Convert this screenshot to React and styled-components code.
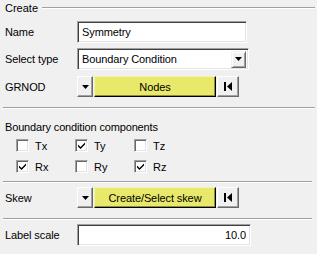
import React from 'react'
import styled, { createGlobalStyle } from 'styled-components'

const Global = createGlobalStyle`
  html, body {
    margin: 0;
    background: #f0f0f0;
  }
  body {
    font-family: "Liberation Sans", Arial, sans-serif;
    font-size: 11px;
    color: #000;
  }
`

const Panel = styled.div`
  width: 317px;
  height: 254px;
  box-sizing: border-box;
  padding: 0 2px 0 3px;
  display: flex;
  flex-direction: column;
  overflow: hidden;
`

const GroupHeader = styled.div`
  height: 15px;
  display: flex;
  align-items: center;
  padding-left: 2px;
  gap: 4px;

  span { line-height: 14px; }
`

const Rule = styled.div`
  flex: 1;
  height: 0;
  border-top: 1px solid #a0a0a0;
  border-bottom: 1px solid #fff;
`

const Separator = styled.div`
  height: 0;
  margin-top: ${p => p.$top}px;
  margin-right: ${p => p.$right || 0}px;
  border-top: 1px solid #a0a0a0;
  border-bottom: 1px solid #fff;
`

const Row = styled.div`
  display: flex;
  align-items: center;
  padding-left: 2px;
  margin-top: ${p => p.$top}px;
  height: ${p => p.$h || 22}px;
`

const Label = styled.div`
  width: 72px;
  flex: none;
  letter-spacing: -0.1px;
`

const sunken = `
  box-sizing: border-box;
  border: 1px solid;
  border-color: #a0a0a0 #fff #fff #a0a0a0;
  box-shadow: inset 1px 1px 0 #404040, inset -1px -1px 0 #e3e3e3;
  background: #fff;
`

const TextBox = styled.input`
  ${sunken}
  width: ${p => p.$w}px;
  height: 22px;
  padding: 0 ${p => (p.$right ? 4 : 0)}px 0 4px;
  margin: 0;
  font: inherit;
  letter-spacing: -0.1px;
  text-align: ${p => (p.$right ? 'right' : 'left')};
  outline: none;
`

const Combo = styled.div`
  ${sunken}
  width: 172px;
  height: 22px;
  display: flex;
  align-items: center;
  justify-content: space-between;
  padding: 2px 2px 2px 4px;
  letter-spacing: -0.1px;
`

const ComboButton = styled.div`
  width: 15px;
  height: 17px;
  box-sizing: border-box;
  border: 1px solid;
  border-color: #f0f0f0 #696969 #696969 #f0f0f0;
  box-shadow: inset 1px 1px 0 #fff, inset -1px -1px 0 #a0a0a0;
  background: #f0f0f0;
  display: flex;
  align-items: center;
  justify-content: center;
`

const raised = `
  box-sizing: border-box;
  border: 1px solid;
  border-color: #fff #696969 #696969 #fff;
  box-shadow: inset -1px -1px 0 #a0a0a0;
  display: flex;
  align-items: center;
  justify-content: center;
`

const Collector = styled.div`
  display: flex;
  height: 21px;
  gap: 1px;
`

const IconButton = styled.div`
  ${raised}
  width: ${p => p.$w}px;
  background: #f0f0f0;
`

const YellowButton = styled.div`
  ${raised}
  width: 122px;
  background: #e8e86a;
  border-color: #f4f4b0 #000 #000 #f4f4b0;
  box-shadow: inset -1px -1px 0 #8c8c3c;
  letter-spacing: -0.1px;
`

const SectionTitle = styled.div`
  margin-top: 11px;
  padding-left: 2px;
  line-height: 14px;
  letter-spacing: -0.15px;
`

const CheckGrid = styled.div`
  display: grid;
  grid-template-columns: repeat(3, 59px);
  grid-auto-rows: 21px;
  padding-left: 13px;
  margin-top: 1px;
`

const CheckItem = styled.label`
  display: flex;
  align-items: center;
  gap: 6px;
`

const Box = styled.span`
  width: 13px;
  height: 13px;
  box-sizing: border-box;
  border: 1px solid;
  border-color: #a0a0a0 #fff #fff #a0a0a0;
  box-shadow: inset 1px 1px 0 #696969, inset -1px -1px 0 #e3e3e3;
  background: #fff;
  display: flex;
  align-items: center;
  justify-content: center;
`

const Down = () => (
  <svg width="7" height="4" viewBox="0 0 7 4">
    <path d="M0 0h7L3.5 4z" fill="#000" />
  </svg>
)

const First = () => (
  <svg width="8" height="9" viewBox="0 0 8 9">
    <rect x="0" y="0" width="2" height="9" fill="#000" />
    <path d="M8 0v9L3 4.5z" fill="#000" />
  </svg>
)

const Tick = () => (
  <svg width="7" height="7" viewBox="0 0 7 7">
    <path d="M0 2.5l2.5 2.5L7 0.5v2L2.5 7 0 4.5z" fill="#000" />
  </svg>
)

const components = [
  { name: 'Tx', on: false },
  { name: 'Ty', on: true },
  { name: 'Tz', on: false },
  { name: 'Rx', on: true },
  { name: 'Ry', on: false },
  { name: 'Rz', on: true },
]

function Check({ name, on }) {
  return (
    <CheckItem>
      <Box>{on && <Tick />}</Box>
      <span>{name}</span>
    </CheckItem>
  )
}

function EntityCollector({ children }) {
  return (
    <Collector>
      <IconButton $w={16}><Down /></IconButton>
      <YellowButton>{children}</YellowButton>
      <IconButton $w={22}><First /></IconButton>
    </Collector>
  )
}

export default function App() {
  return (
    <>
      <Global />
      <Panel>
        <GroupHeader>
          <span>Create</span>
          <Rule />
        </GroupHeader>

        <Row $top={6}>
          <Label>Name</Label>
          <TextBox $w={170} value="Symmetry" readOnly />
        </Row>

        <Row $top={5}>
          <Label>Select type</Label>
          <Combo>
            <span>Boundary Condition</span>
            <ComboButton><Down /></ComboButton>
          </Combo>
        </Row>

        <Row $top={6} $h={21}>
          <Label>GRNOD</Label>
          <EntityCollector>Nodes</EntityCollector>
        </Row>

        <Separator $top={10} />

        <SectionTitle>Boundary condition components</SectionTitle>
        <CheckGrid>
          {components.map(c => <Check key={c.name} {...c} />)}
        </CheckGrid>

        <Separator $top={4} $right={3} />

        <Row $top={4} $h={21}>
          <Label>Skew</Label>
          <EntityCollector>Create/Select skew</EntityCollector>
        </Row>

        <Separator $top={10} $right={3} />

        <Row $top={4}>
          <Label>Label scale</Label>
          <TextBox $w={174} $right value="10.0" readOnly />
        </Row>
      </Panel>
    </>
  )
}
